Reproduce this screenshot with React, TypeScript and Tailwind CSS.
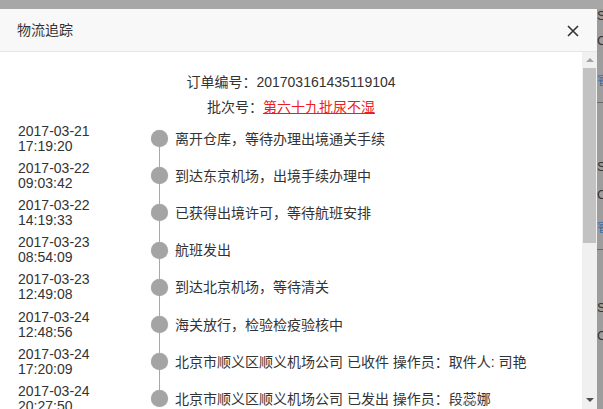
import React from 'react';

type Track = { date: string; time: string; text: string };

const tracks: Track[] = [
  { date: '2017-03-21', time: '17:19:20', text: '离开仓库，等待办理出境通关手续' },
  { date: '2017-03-22', time: '09:03:42', text: '到达东京机场，出境手续办理中' },
  { date: '2017-03-22', time: '14:19:33', text: '已获得出境许可，等待航班安排' },
  { date: '2017-03-23', time: '08:54:09', text: '航班发出' },
  { date: '2017-03-23', time: '12:49:08', text: '到达北京机场，等待清关' },
  { date: '2017-03-24', time: '12:48:56', text: '海关放行，检验检疫验核中' },
  { date: '2017-03-24', time: '17:20:09', text: '北京市顺义区顺义机场公司 已收件 操作员：取件人: 司艳' },
  { date: '2017-03-24', time: '20:27:50', text: '北京市顺义区顺义机场公司 已发出 操作员：段蕊娜' },
];

const font = { fontFamily: '"Liberation Sans", "Noto Sans CJK SC", sans-serif' };

const TrackRow: React.FC<{ item: Track; first: boolean; last: boolean }> = ({ item, first, last }) => (
  <div className="flex h-[37.2px] items-center">
    <div className="w-[150px] shrink-0 pl-[18px] text-[14px] leading-[15px] text-[#333]">
      <div>{item.date}</div>
      <div>{item.time}</div>
    </div>
    <div className="relative flex h-full w-[18px] shrink-0 items-center justify-center">
      {!first && <div className="absolute left-[8.5px] top-0 h-1/2 w-px bg-[#a8a8a8]" />}
      {!last && <div className="absolute bottom-0 left-[8.5px] h-1/2 w-px bg-[#a8a8a8]" />}
      <div className="relative h-[17px] w-[17px] rounded-full bg-[#a4a4a4] shadow-[0_0_1px_#bbb]" />
    </div>
    <div className="whitespace-nowrap pl-[7px] text-[14px] leading-[20px] text-[#333]">{item.text}</div>
  </div>
);

const Scrollbar: React.FC = () => (
  <div className="flex w-[15px] shrink-0 flex-col bg-[#f0f0f0]">
    <div className="flex h-[16px] items-center justify-center">
      <div className="h-0 w-0 border-x-[4px] border-b-[4px] border-x-transparent border-b-[#a3a3a3]" />
    </div>
    <div className="mx-px h-[175px] bg-[#c2c2c2]" />
    <div className="flex-1" />
    <div className="flex h-[18px] items-center justify-center">
      <div className="h-0 w-0 border-x-[4px] border-t-[4px] border-x-transparent border-t-[#505050]" />
    </div>
  </div>
);

export default function App() {
  return (
    <div className="flex h-[409px] w-[603px] flex-col overflow-hidden bg-[#a5a5a5]" style={font}>
      <div className="h-[9px] shrink-0 bg-[#a7a7a7]" />
      <div className="flex min-h-0 flex-1">
        <div className="flex w-[597px] shrink-0 flex-col bg-white">
          <div className="flex h-[43px] shrink-0 items-center justify-between border-b border-[#e6e6e6] bg-[#f8f8f8] pl-[17px] pr-[18px]">
            <span className="text-[14px] text-[#333]">物流追踪</span>
            <svg width="12" height="12" viewBox="0 0 12 12" className="mt-[1px]">
              <path d="M1 1 L11 11 M11 1 L1 11" stroke="#333" strokeWidth="1.6" />
            </svg>
          </div>
          <div className="flex min-h-0 flex-1">
            <div className="min-w-0 flex-1 overflow-hidden pt-[18px]">
              <div className="text-center text-[14px] leading-[25px] text-[#333]">
                订单编号：201703161435119104
              </div>
              <div className="text-center text-[14px] leading-[25px] text-[#333]">
                批次号：<a className="text-[#ee1c25] underline">第六十九批尿不湿</a>
              </div>
              {tracks.map((t, i) => (
                <TrackRow key={i} item={t} first={i === 0} last={i === tracks.length - 1} />
              ))}
            </div>
            <Scrollbar />
          </div>
        </div>
        <div className="flex w-[6px] shrink-0 flex-col overflow-hidden bg-[#9d9d9d] text-[13px] leading-[16px] text-[#333]">
          <div className="mt-[-1px]">S</div>
          <div className="mt-[9px]">C</div>
          <div className="mt-[23px] text-[#3a6ea5]">睿</div>
          <div className="mt-[14px] h-px bg-[#6a6a6a]" />
          <div className="mt-[56px]">S</div>
          <div className="mt-[12px]">C</div>
          <div className="mt-[16px] text-[#3a6ea5]">睿</div>
          <div className="mt-[14px] h-px bg-[#6a6a6a]" />
          <div className="mt-[50px]">S</div>
          <div className="mt-[12px]">C</div>
        </div>
      </div>
    </div>
  );
}
